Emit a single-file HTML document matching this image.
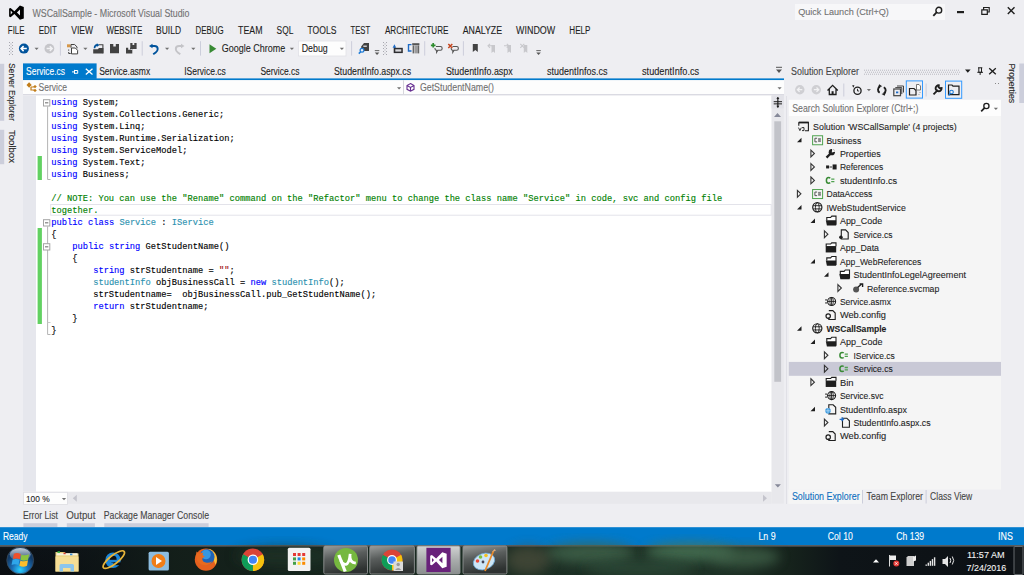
<!DOCTYPE html>
<html><head><meta charset="utf-8"><title>WSCallSample - Microsoft Visual Studio</title>
<style>
html,body{margin:0;padding:0;width:1024px;height:575px;overflow:hidden;background:#EEEEF2}
svg{display:block}
text{font-family:"Liberation Sans",sans-serif}
.code text{font-family:"Liberation Mono",monospace}
</style></head><body>
<svg width="1024" height="575" viewBox="0 0 1024 575">
<rect x="0" y="0" width="1024" height="575" fill="#EEEEF2" />
<path d="M9.1,8.6 L10.6,8 L14.4,11.2 L19.9,5.5 L23.8,6.9 L23.8,18.4 L19.9,19.8 L14.4,13.9 L10.6,17.2 L9.1,16.6 Z M10.7,10.6 L12.5,12.5 L10.7,14.4 Z M20,9.6 L20,15.4 L16.9,12.5 Z" fill="#000" fill-rule="evenodd"/>
<text x="32.49" y="16.50" font-size="10.2" fill="#717171" stroke="#717171" stroke-width="0.1" textLength="157.02" lengthAdjust="spacingAndGlyphs" >WSCallSample - Microsoft Visual Studio</text>
<rect x="795" y="4" width="150" height="16" fill="#F7F7F9" />
<text x="798.13" y="14.80" font-size="9.3" fill="#717171" stroke="#717171" stroke-width="0.1" textLength="90.73" lengthAdjust="spacingAndGlyphs" >Quick Launch (Ctrl+Q)</text>
<circle cx="938.8" cy="10.2" r="2.9" fill="none" stroke="#1E1E1E" stroke-width="1.4"/>
<path d="M936.8,12.2 L933.3,15.8" fill="none" stroke="#1E1E1E" stroke-width="1.8" />
<rect x="957" y="11" width="7" height="2.2" fill="#1E1E1E" />
<path d="M981.8,9.8 h5.5 v4.5 h-5.5 Z M983.6,9.8 v-2.3 h5.6 v4.5 h-1.9" fill="none" stroke="#1E1E1E" stroke-width="1.2" />
<path d="M1007.8,7.3 L1014.5,14 M1014.5,7.3 L1007.8,14" fill="none" stroke="#1E1E1E" stroke-width="1.4" />
<text x="7.85" y="33.70" font-size="10" fill="#1E1E1E" stroke="#1E1E1E" stroke-width="0.1" textLength="16.55" lengthAdjust="spacingAndGlyphs" >FILE</text>
<text x="38.80" y="33.70" font-size="10" fill="#1E1E1E" stroke="#1E1E1E" stroke-width="0.1" textLength="18.10" lengthAdjust="spacingAndGlyphs" >EDIT</text>
<text x="71.30" y="33.70" font-size="10" fill="#1E1E1E" stroke="#1E1E1E" stroke-width="0.1" textLength="21.80" lengthAdjust="spacingAndGlyphs" >VIEW</text>
<text x="106.40" y="33.70" font-size="10" fill="#1E1E1E" stroke="#1E1E1E" stroke-width="0.1" textLength="35.90" lengthAdjust="spacingAndGlyphs" >WEBSITE</text>
<text x="156.10" y="33.70" font-size="10" fill="#1E1E1E" stroke="#1E1E1E" stroke-width="0.1" textLength="24.90" lengthAdjust="spacingAndGlyphs" >BUILD</text>
<text x="195.60" y="33.70" font-size="10" fill="#1E1E1E" stroke="#1E1E1E" stroke-width="0.1" textLength="28.10" lengthAdjust="spacingAndGlyphs" >DEBUG</text>
<text x="238.10" y="33.70" font-size="10" fill="#1E1E1E" stroke="#1E1E1E" stroke-width="0.1" textLength="24.40" lengthAdjust="spacingAndGlyphs" >TEAM</text>
<text x="276.60" y="33.70" font-size="10" fill="#1E1E1E" stroke="#1E1E1E" stroke-width="0.1" textLength="16.70" lengthAdjust="spacingAndGlyphs" >SQL</text>
<text x="307.50" y="33.70" font-size="10" fill="#1E1E1E" stroke="#1E1E1E" stroke-width="0.1" textLength="28.90" lengthAdjust="spacingAndGlyphs" >TOOLS</text>
<text x="350.50" y="33.70" font-size="10" fill="#1E1E1E" stroke="#1E1E1E" stroke-width="0.1" textLength="19.60" lengthAdjust="spacingAndGlyphs" >TEST</text>
<text x="384.90" y="33.70" font-size="10" fill="#1E1E1E" stroke="#1E1E1E" stroke-width="0.1" textLength="63.60" lengthAdjust="spacingAndGlyphs" >ARCHITECTURE</text>
<text x="462.70" y="33.70" font-size="10" fill="#1E1E1E" stroke="#1E1E1E" stroke-width="0.1" textLength="39.40" lengthAdjust="spacingAndGlyphs" >ANALYZE</text>
<text x="516.10" y="33.70" font-size="10" fill="#1E1E1E" stroke="#1E1E1E" stroke-width="0.1" textLength="39.10" lengthAdjust="spacingAndGlyphs" >WINDOW</text>
<text x="569.30" y="33.70" font-size="10" fill="#1E1E1E" stroke="#1E1E1E" stroke-width="0.1" textLength="21.10" lengthAdjust="spacingAndGlyphs" >HELP</text>
<rect x="9" y="42" width="1" height="1" fill="#A8A8B0" />
<rect x="12" y="42" width="1" height="1" fill="#A8A8B0" />
<rect x="10.5" y="43.5" width="1" height="1" fill="#A8A8B0" />
<rect x="9" y="45.0" width="1" height="1" fill="#A8A8B0" />
<rect x="12" y="45.0" width="1" height="1" fill="#A8A8B0" />
<rect x="10.5" y="46.5" width="1" height="1" fill="#A8A8B0" />
<rect x="9" y="48.0" width="1" height="1" fill="#A8A8B0" />
<rect x="12" y="48.0" width="1" height="1" fill="#A8A8B0" />
<rect x="10.5" y="49.5" width="1" height="1" fill="#A8A8B0" />
<rect x="9" y="51.0" width="1" height="1" fill="#A8A8B0" />
<rect x="12" y="51.0" width="1" height="1" fill="#A8A8B0" />
<rect x="10.5" y="52.5" width="1" height="1" fill="#A8A8B0" />
<rect x="9" y="54.0" width="1" height="1" fill="#A8A8B0" />
<rect x="12" y="54.0" width="1" height="1" fill="#A8A8B0" />
<circle cx="23.9" cy="48.6" r="5" fill="#00539C"/>
<path d="M26.8,48.6 H21.3 M23.6,46.1 L21.1,48.6 L23.6,51.1" fill="none" stroke="#fff" stroke-width="1.5" />
<path d="M34.5,47.8 h4.2 l-2.1,2.2 Z" fill="#717171" />
<circle cx="49.4" cy="48.6" r="4.9" fill="#C6C6CA"/>
<path d="M46.6,48.6 H52 M49.8,46.2 L52.2,48.6 L49.8,51" fill="none" stroke="#F2F2F4" stroke-width="1.5" />
<rect x="59.9" y="41.2" width="1" height="14.399999999999999" fill="#CCCEDB" />
<rect x="67" y="44.3" width="3.5" height="3" fill="#D5974A" />
<path d="M71,44.5 h3.6 l2.4,2.4 v1.5" fill="none" stroke="#424242" stroke-width="1" />
<path d="M71.5,48 h3.8 l2.3,2.3 v3.6 h-6.1 Z" fill="#fff" stroke="#424242" stroke-width="1" />
<path d="M71,44.5 v3.2" fill="none" stroke="#424242" stroke-width="1" />
<path d="M68.7,49.5 v1.2 M68.7,52 v1.5 h2" fill="none" stroke="#424242" stroke-width="1" />
<path d="M83.3,47.8 h4.2 l-2.1,2.2 Z" fill="#717171" />
<path d="M98.8,44.8 h4.1 v8.5" fill="none" stroke="#424242" stroke-width="1.1" />
<path d="M93.2,49.2 h4.6 l1.2,-1.2 h4.4 v5.6 h-10.2 Z" fill="#424242" />
<path d="M94.5,48.3 q0,-3.2 3,-3.4" fill="none" stroke="#00539C" stroke-width="1.6" />
<path d="M96.8,43.2 l2.6,1.8 l-2.6,1.9 Z" fill="#00539C" />
<path d="M110,43.9 h9 v9.3 h-9 Z M113.3,43.9 v2.6 h2.5 v-2.6 Z" fill="#424242" fill-rule="evenodd"/>
<path d="M130.3,43 h6.3 v6 h-6.3 Z M132.5,43 v2 h1.8 v-2 Z" fill="#424242" fill-rule="evenodd"/>
<path d="M126,47.8 h6.3 v5.8 h-6.3 Z M128.2,47.8 v2 h1.8 v-2 Z" fill="#424242" fill-rule="evenodd"/>
<rect x="130.3" y="49" width="2" height="0.8" fill="#EEEEF2" />
<rect x="141.7" y="41.2" width="1" height="14.399999999999999" fill="#CCCEDB" />
<path d="M151,46 h3.5 q3.2,0 3.2,3 q0,2 -2,3.5 l-2.5,1.8" fill="none" stroke="#00539C" stroke-width="1.9" />
<path d="M149,46 l3.5,-2.2 v4.4 Z" fill="#00539C" />
<path d="M165,47.8 h4.2 l-2.1,2.2 Z" fill="#717171" />
<path d="M182.5,46 h-3.5 q-3.2,0 -3.2,3 q0,2 2,3.5 l2.5,1.8" fill="none" stroke="#C4C4C8" stroke-width="1.9" />
<path d="M184.5,46 l-3.5,-2.2 v4.4 Z" fill="#C4C4C8" />
<path d="M191.2,47.8 h4.2 l-2.1,2.2 Z" fill="#717171" />
<rect x="200.0" y="41.2" width="1" height="14.399999999999999" fill="#CCCEDB" />
<path d="M209.5,44.2 L216.3,48.7 L209.5,53.2 Z" fill="#388A34" />
<text x="221.69" y="52.00" font-size="10.3" fill="#1E1E1E" stroke="#1E1E1E" stroke-width="0.1" textLength="63.53" lengthAdjust="spacingAndGlyphs" >Google Chrome</text>
<path d="M289.8,47.8 h4.2 l-2.1,2.2 Z" fill="#717171" />
<rect x="298.5" y="41" width="47.5" height="15" fill="#FDFDFD" stroke="#E0E0E6" stroke-width="0.8"/>
<text x="301.69" y="52.00" font-size="10.3" fill="#1E1E1E" stroke="#1E1E1E" stroke-width="0.1" textLength="26.03" lengthAdjust="spacingAndGlyphs" >Debug</text>
<path d="M339.8,47.8 h4.2 l-2.1,2.2 Z" fill="#717171" />
<rect x="351.1" y="41.2" width="1" height="14.399999999999999" fill="#CCCEDB" />
<path d="M364,43.1 h5 v7.9 h-7.8 v-4.5 Z" fill="#424242" />
<rect x="363.3" y="45.6" width="3.5" height="1.2" fill="#EEEEF2" />
<circle cx="362" cy="50.3" r="1.9" fill="#EEEEF2" stroke="#1E7BD6" stroke-width="1.2"/>
<path d="M360.7,51.7 L358.8,53.6" fill="none" stroke="#1E7BD6" stroke-width="1.5" />
<rect x="374.8" y="50.2" width="4.5" height="0.9" fill="#555" />
<path d="M374.8,52.5 h4.5 l-2.25,2.5 Z" fill="#555" />
<rect x="383" y="42" width="1" height="1" fill="#A8A8B0" />
<rect x="386" y="42" width="1" height="1" fill="#A8A8B0" />
<rect x="384.5" y="43.5" width="1" height="1" fill="#A8A8B0" />
<rect x="383" y="45.0" width="1" height="1" fill="#A8A8B0" />
<rect x="386" y="45.0" width="1" height="1" fill="#A8A8B0" />
<rect x="384.5" y="46.5" width="1" height="1" fill="#A8A8B0" />
<rect x="383" y="48.0" width="1" height="1" fill="#A8A8B0" />
<rect x="386" y="48.0" width="1" height="1" fill="#A8A8B0" />
<rect x="384.5" y="49.5" width="1" height="1" fill="#A8A8B0" />
<rect x="383" y="51.0" width="1" height="1" fill="#A8A8B0" />
<rect x="386" y="51.0" width="1" height="1" fill="#A8A8B0" />
<rect x="384.5" y="52.5" width="1" height="1" fill="#A8A8B0" />
<rect x="383" y="54.0" width="1" height="1" fill="#A8A8B0" />
<rect x="386" y="54.0" width="1" height="1" fill="#A8A8B0" />
<path d="M392.6,47.8 l1.8,-3.6 l1.8,3.6 Z" fill="#1E6BC6" />
<rect x="394" y="46.8" width="0.9" height="2" fill="#1E6BC6" />
<rect x="393.7" y="47.8" width="9.1" height="5.3" fill="#2D2D30" />
<rect x="395.3" y="49.3" width="6" height="2.3" fill="#D8D8DC" />
<path d="M411.5,44.6 h-3 v6.4 h3" fill="none" stroke="#1E6BC6" stroke-width="1.4" />
<rect x="412.2" y="43.2" width="7.2" height="2" fill="#555" />
<rect x="412.6" y="45.4" width="1.8" height="8" fill="#666" />
<rect x="415.2" y="45.4" width="1.6" height="8" fill="#888" />
<rect x="417.4" y="45.4" width="1.8" height="8" fill="#666" />
<rect x="424.2" y="41.2" width="1" height="14.399999999999999" fill="#CCCEDB" />
<path d="M436,46.5 h4.5 q1.6,0 1.6,1.6 v0.6 q0,1.6 -1.6,1.6 h-2.6 l-1.3,2 v-2 q-1.6,0 -1.6,-1.6 v-0.6" fill="none" stroke="#555" stroke-width="1.1" />
<path d="M433.2,43 v4.6 M430.9,45.3 h4.6" fill="none" stroke="#2E8C2E" stroke-width="1.7" />
<path d="M452.5,46.5 h4.2 q1.6,0 1.6,1.6 v0.6 q0,1.6 -1.6,1.6 h-2.6 l-1.3,2 v-2 q-1.6,0 -1.6,-1.6 v-0.6" fill="none" stroke="#555" stroke-width="1.1" />
<path d="M448.3,44 L452.3,48 M452.3,44 L448.3,48" fill="none" stroke="#C5441C" stroke-width="1.5" />
<rect x="462.9" y="41.2" width="1" height="14.399999999999999" fill="#CCCEDB" />
<path d="M472.8,43.9 h5 v8.2 l-2.5,-2 l-2.5,2 Z" fill="#424242" />
<path d="M491.5,45 h3.5 v8 l-1.75,-1.6 l-1.75,1.6 Z" fill="#C8C8CC" />
<path d="M493,45.8 h-4.5 M490,43.8 l-2,2 l2,2" fill="none" stroke="#C8C8CC" stroke-width="1.1" />
<path d="M507.5,45 h3.5 v8 l-1.75,-1.6 l-1.75,1.6 Z" fill="#C8C8CC" />
<path d="M504,45.8 h4.5 M506.8,43.8 l2,2 l-2,2" fill="none" stroke="#C8C8CC" stroke-width="1.1" />
<path d="M523.8,45 h3.5 v8 l-1.75,-1.6 l-1.75,1.6 Z" fill="#C8C8CC" />
<path d="M520.3,43.8 l4,4 M524.3,43.8 l-4,4" fill="none" stroke="#C8C8CC" stroke-width="1.1" />
<rect x="536.3" y="50.2" width="4.5" height="0.9" fill="#555" />
<path d="M536.3,52.5 h4.5 l-2.25,2.5 Z" fill="#555" />
<rect x="0" y="63.8" width="4.2" height="57" fill="#CCCEDB" />
<rect x="0" y="129.8" width="4.2" height="34.4" fill="#CCCEDB" />
<g transform="translate(9.0,63.8) rotate(90)">
<text x="-0.48" y="0.00" font-size="9.7" fill="#1E1E1E" stroke="#1E1E1E" stroke-width="0.1" textLength="57.57" lengthAdjust="spacingAndGlyphs" >Server Explorer</text>
</g>
<g transform="translate(9.0,130.4) rotate(90)">
<text x="-0.48" y="0.00" font-size="9.7" fill="#1E1E1E" stroke="#1E1E1E" stroke-width="0.1" textLength="33.07" lengthAdjust="spacingAndGlyphs" >Toolbox</text>
</g>
<rect x="23" y="63.4" width="73.6" height="15.5" fill="#007ACC" />
<text x="26.10" y="74.80" font-size="10.0" fill="#FFFFFF" stroke="#FFFFFF" stroke-width="0.1" textLength="38.90" lengthAdjust="spacingAndGlyphs" >Service.cs</text>
<path d="M72,71.9 h2.5 M74.5,69.9 v4 M74.5,70.5 h3.2 v2.8 h-3.2" fill="none" stroke="#fff" stroke-width="1" />
<path d="M85.8,68.7 L92.5,74.4 M92.5,68.7 L85.8,74.4" fill="none" stroke="#fff" stroke-width="1.3" />
<text x="99.20" y="74.80" font-size="10.0" fill="#1E1E1E" stroke="#1E1E1E" stroke-width="0.1" textLength="51.00" lengthAdjust="spacingAndGlyphs" >Service.asmx</text>
<text x="184.20" y="74.80" font-size="10.0" fill="#1E1E1E" stroke="#1E1E1E" stroke-width="0.1" textLength="41.60" lengthAdjust="spacingAndGlyphs" >IService.cs</text>
<text x="260.40" y="74.80" font-size="10.0" fill="#1E1E1E" stroke="#1E1E1E" stroke-width="0.1" textLength="39.00" lengthAdjust="spacingAndGlyphs" >Service.cs</text>
<text x="334.00" y="74.80" font-size="10.0" fill="#1E1E1E" stroke="#1E1E1E" stroke-width="0.1" textLength="77.10" lengthAdjust="spacingAndGlyphs" >StudentInfo.aspx.cs</text>
<text x="445.90" y="74.80" font-size="10.0" fill="#1E1E1E" stroke="#1E1E1E" stroke-width="0.1" textLength="66.80" lengthAdjust="spacingAndGlyphs" >StudentInfo.aspx</text>
<text x="547.10" y="74.80" font-size="10.0" fill="#1E1E1E" stroke="#1E1E1E" stroke-width="0.1" textLength="60.40" lengthAdjust="spacingAndGlyphs" >studentInfos.cs</text>
<text x="642.00" y="74.80" font-size="10.0" fill="#1E1E1E" stroke="#1E1E1E" stroke-width="0.1" textLength="57.10" lengthAdjust="spacingAndGlyphs" >studentInfo.cs</text>
<rect x="776" y="66.8" width="6" height="1" fill="#555" />
<path d="M776,69.5 h6 l-3,3.5 Z" fill="#555" />
<rect x="23" y="78.4" width="761" height="1.8" fill="#007ACC" />
<rect x="23" y="80.2" width="761" height="14.2" fill="#FDFDFD" />
<rect x="23" y="94.2" width="761" height="1.6" fill="#D4D4DC" />
<rect x="403" y="80.2" width="1" height="14" fill="#D6D6DC" />
<path d="M26.5,85 l2.6,-2.8 l2.6,2.8 l-2.6,2.8 Z" fill="#C27D1A" />
<path d="M31,87 h3 M31,87 v3 h3" fill="none" stroke="#C27D1A" stroke-width="1.2" />
<path d="M33.2,86.6 l1.8,-1.6 l1.8,1.6 l-1.8,1.6 Z M33.2,90.4 l1.8,-1.6 l1.8,1.6 l-1.8,1.6 Z" fill="#C27D1A" />
<text x="38.50" y="90.70" font-size="10.0" fill="#717171" stroke="#717171" stroke-width="0.1" textLength="28.40" lengthAdjust="spacingAndGlyphs" >Service</text>
<path d="M397,87.2 h4.2 l-2.1,2.2 Z" fill="#717171" />
<path d="M410.5,83.6 l3.5,1.9 v3.8 l-3.5,1.9 l-3.5,-1.9 v-3.8 Z M407,85.5 l3.5,1.9 l3.5,-1.9 M410.5,87.4 v3.8" fill="none" stroke="#652D90" stroke-width="1.1" />
<text x="419.90" y="90.70" font-size="10.0" fill="#717171" stroke="#717171" stroke-width="0.1" textLength="74.10" lengthAdjust="spacingAndGlyphs" >GetStudentName()</text>
<path d="M777.5,87.2 h4.2 l-2.1,2.2 Z" fill="#717171" />
<rect x="23" y="95.4" width="749" height="396.4" fill="#FFFFFF" />
<rect x="23" y="95.4" width="13" height="396.4" fill="#E6E7ED" />
<rect x="50.7" y="204.5" width="720.5" height="10.7" fill="none" stroke="#E3E3EA" stroke-width="1"/>
<rect x="37.6" y="156" width="4.3" height="24" fill="#62D162" />
<rect x="37.6" y="228" width="4.3" height="96" fill="#62D162" />
<rect x="43.5" y="99.7" width="6.3" height="6.3" fill="#FFFFFF" stroke="#A5A5A5" stroke-width="1"/>
<rect x="45" y="102.4" width="3.3" height="0.9" fill="#555" />
<path d="M47.6,106.3 V179.5 H50.5" fill="none" stroke="#B4B4B4" stroke-width="1" />
<rect x="43.5" y="219.7" width="6.3" height="6.3" fill="#FFFFFF" stroke="#A5A5A5" stroke-width="1"/>
<rect x="45" y="222.39999999999998" width="3.3" height="0.9" fill="#555" />
<path d="M47.6,226.3 V334.5 H50.5" fill="none" stroke="#B4B4B4" stroke-width="1" />
<rect x="43.5" y="243.7" width="6.3" height="6.3" fill="#FFFFFF" stroke="#A5A5A5" stroke-width="1"/>
<rect x="45" y="246.39999999999998" width="3.3" height="0.9" fill="#555" />
<path d="M47.6,322.5 H50.5" fill="none" stroke="#C8C8C8" stroke-width="1" />
<g class="code" transform="translate(51.2,0) scale(0.94070,1)" font-size="9.3" style="white-space:pre">
<text x="0" y="105.2" xml:space="preserve"><tspan fill="#0000FF" stroke="#0000FF" stroke-width="0.14">using</tspan><tspan fill="#000000" stroke="#000000" stroke-width="0.14"> System;</tspan></text>
<text x="0" y="117.2" xml:space="preserve"><tspan fill="#0000FF" stroke="#0000FF" stroke-width="0.14">using</tspan><tspan fill="#000000" stroke="#000000" stroke-width="0.14"> System.Collections.Generic;</tspan></text>
<text x="0" y="129.2" xml:space="preserve"><tspan fill="#0000FF" stroke="#0000FF" stroke-width="0.14">using</tspan><tspan fill="#000000" stroke="#000000" stroke-width="0.14"> System.Linq;</tspan></text>
<text x="0" y="141.2" xml:space="preserve"><tspan fill="#0000FF" stroke="#0000FF" stroke-width="0.14">using</tspan><tspan fill="#000000" stroke="#000000" stroke-width="0.14"> System.Runtime.Serialization;</tspan></text>
<text x="0" y="153.2" xml:space="preserve"><tspan fill="#0000FF" stroke="#0000FF" stroke-width="0.14">using</tspan><tspan fill="#000000" stroke="#000000" stroke-width="0.14"> System.ServiceModel;</tspan></text>
<text x="0" y="165.2" xml:space="preserve"><tspan fill="#0000FF" stroke="#0000FF" stroke-width="0.14">using</tspan><tspan fill="#000000" stroke="#000000" stroke-width="0.14"> System.Text;</tspan></text>
<text x="0" y="177.2" xml:space="preserve"><tspan fill="#0000FF" stroke="#0000FF" stroke-width="0.14">using</tspan><tspan fill="#000000" stroke="#000000" stroke-width="0.14"> Business;</tspan></text>
<text x="0" y="201.2" xml:space="preserve"><tspan fill="#008000" stroke="#008000" stroke-width="0.14">// NOTE: You can use the &quot;Rename&quot; command on the &quot;Refactor&quot; menu to change the class name &quot;Service&quot; in code, svc and config file</tspan></text>
<text x="0" y="213.2" xml:space="preserve"><tspan fill="#008000" stroke="#008000" stroke-width="0.14">together.</tspan></text>
<text x="0" y="225.2" xml:space="preserve"><tspan fill="#0000FF" stroke="#0000FF" stroke-width="0.14">public</tspan><tspan fill="#000000" stroke="#000000" stroke-width="0.14"> </tspan><tspan fill="#0000FF" stroke="#0000FF" stroke-width="0.14">class</tspan><tspan fill="#000000" stroke="#000000" stroke-width="0.14"> </tspan><tspan fill="#2B91AF" stroke="#2B91AF" stroke-width="0.14">Service</tspan><tspan fill="#000000" stroke="#000000" stroke-width="0.14"> : </tspan><tspan fill="#2B91AF" stroke="#2B91AF" stroke-width="0.14">IService</tspan></text>
<text x="0" y="237.2" xml:space="preserve"><tspan fill="#000000" stroke="#000000" stroke-width="0.14">{</tspan></text>
<text x="0" y="249.2" xml:space="preserve"><tspan fill="#000000" stroke="#000000" stroke-width="0.14">    </tspan><tspan fill="#0000FF" stroke="#0000FF" stroke-width="0.14">public</tspan><tspan fill="#000000" stroke="#000000" stroke-width="0.14"> </tspan><tspan fill="#0000FF" stroke="#0000FF" stroke-width="0.14">string</tspan><tspan fill="#000000" stroke="#000000" stroke-width="0.14"> GetStudentName()</tspan></text>
<text x="0" y="261.2" xml:space="preserve"><tspan fill="#000000" stroke="#000000" stroke-width="0.14">    {</tspan></text>
<text x="0" y="273.2" xml:space="preserve"><tspan fill="#000000" stroke="#000000" stroke-width="0.14">        </tspan><tspan fill="#0000FF" stroke="#0000FF" stroke-width="0.14">string</tspan><tspan fill="#000000" stroke="#000000" stroke-width="0.14"> strStudentname = </tspan><tspan fill="#A31515" stroke="#A31515" stroke-width="0.14">&quot;&quot;</tspan><tspan fill="#000000" stroke="#000000" stroke-width="0.14">;</tspan></text>
<text x="0" y="285.2" xml:space="preserve"><tspan fill="#000000" stroke="#000000" stroke-width="0.14">        </tspan><tspan fill="#2B91AF" stroke="#2B91AF" stroke-width="0.14">studentInfo</tspan><tspan fill="#000000" stroke="#000000" stroke-width="0.14"> objBusinessCall = </tspan><tspan fill="#0000FF" stroke="#0000FF" stroke-width="0.14">new</tspan><tspan fill="#000000" stroke="#000000" stroke-width="0.14"> </tspan><tspan fill="#2B91AF" stroke="#2B91AF" stroke-width="0.14">studentInfo</tspan><tspan fill="#000000" stroke="#000000" stroke-width="0.14">();</tspan></text>
<text x="0" y="297.2" xml:space="preserve"><tspan fill="#000000" stroke="#000000" stroke-width="0.14">        strStudentname=  objBusinessCall.pub_GetStudentName();</tspan></text>
<text x="0" y="309.2" xml:space="preserve"><tspan fill="#000000" stroke="#000000" stroke-width="0.14">        </tspan><tspan fill="#0000FF" stroke="#0000FF" stroke-width="0.14">return</tspan><tspan fill="#000000" stroke="#000000" stroke-width="0.14"> strStudentname;</tspan></text>
<text x="0" y="321.2" xml:space="preserve"><tspan fill="#000000" stroke="#000000" stroke-width="0.14">    }</tspan></text>
<text x="0" y="333.2" xml:space="preserve"><tspan fill="#000000" stroke="#000000" stroke-width="0.14">}</tspan></text>
</g>
<rect x="771.5" y="95.4" width="12.3" height="408.2" fill="#E8E8EC" />
<rect x="771.5" y="95.4" width="12.3" height="13" fill="#E2E2E8" />
<rect x="773.7" y="101.1" width="8.3" height="1.1" fill="#333" />
<rect x="773.7" y="103.3" width="8.3" height="1.1" fill="#333" />
<path d="M777.85,97.3 V107.4" fill="none" stroke="#1E1E1E" stroke-width="1.2" />
<path d="M776.3,99 l1.55,-1.9 l1.55,1.9 Z M776.3,105.8 l1.55,1.9 l1.55,-1.9 Z" fill="#1E1E1E" />
<path d="M774,116.9 L777.5,113.1 L781,116.9 Z" fill="#868999" />
<rect x="774.3" y="121.3" width="6.8" height="260.5" fill="#C2C3C9" />
<path d="M774.8,484.3 L777.85,487.5 L780.9,484.3 Z" fill="#868999" />
<rect x="23.4" y="491.8" width="748" height="12" fill="#E8E8EC" />
<rect x="23.6" y="492.3" width="43.8" height="12.2" fill="#FDFDFD" stroke="#DCDCE2" stroke-width="0.8"/>
<text x="25.92" y="501.70" font-size="9.5" fill="#1E1E1E" stroke="#1E1E1E" stroke-width="0.1" textLength="23.75" lengthAdjust="spacingAndGlyphs" >100 %</text>
<path d="M61.9,498 h4.2 l-2.1,2.2 Z" fill="#717171" />
<path d="M76.8,494.8 L72.8,498.3 L76.8,501.7 Z" fill="#C4C4CC" />
<path d="M763,494.8 L767,498.3 L763,501.7 Z" fill="#C4C4CC" />
<text x="22.89" y="518.50" font-size="10.2" fill="#444444" stroke="#444444" stroke-width="0.1" textLength="35.02" lengthAdjust="spacingAndGlyphs" >Error List</text>
<rect x="23.4" y="523.2" width="34.0" height="3.8" fill="#CCCEDB" />
<text x="66.29" y="518.50" font-size="10.2" fill="#444444" stroke="#444444" stroke-width="0.1" textLength="29.12" lengthAdjust="spacingAndGlyphs" >Output</text>
<rect x="66.8" y="523.2" width="28.10000000000001" height="3.8" fill="#CCCEDB" />
<text x="103.79" y="518.50" font-size="10.2" fill="#444444" stroke="#444444" stroke-width="0.1" textLength="105.32" lengthAdjust="spacingAndGlyphs" >Package Manager Console</text>
<rect x="104.3" y="523.2" width="104.3" height="3.8" fill="#CCCEDB" />
<text x="791.10" y="74.80" font-size="10.0" fill="#444444" stroke="#444444" stroke-width="0.1" textLength="67.80" lengthAdjust="spacingAndGlyphs" >Solution Explorer</text>
<rect x="864" y="69.7" width="1" height="1" fill="#B8B8C0" />
<rect x="866" y="69.7" width="1" height="1" fill="#B8B8C0" />
<rect x="868" y="69.7" width="1" height="1" fill="#B8B8C0" />
<rect x="870" y="69.7" width="1" height="1" fill="#B8B8C0" />
<rect x="872" y="69.7" width="1" height="1" fill="#B8B8C0" />
<rect x="874" y="69.7" width="1" height="1" fill="#B8B8C0" />
<rect x="876" y="69.7" width="1" height="1" fill="#B8B8C0" />
<rect x="878" y="69.7" width="1" height="1" fill="#B8B8C0" />
<rect x="880" y="69.7" width="1" height="1" fill="#B8B8C0" />
<rect x="882" y="69.7" width="1" height="1" fill="#B8B8C0" />
<rect x="884" y="69.7" width="1" height="1" fill="#B8B8C0" />
<rect x="886" y="69.7" width="1" height="1" fill="#B8B8C0" />
<rect x="888" y="69.7" width="1" height="1" fill="#B8B8C0" />
<rect x="890" y="69.7" width="1" height="1" fill="#B8B8C0" />
<rect x="892" y="69.7" width="1" height="1" fill="#B8B8C0" />
<rect x="894" y="69.7" width="1" height="1" fill="#B8B8C0" />
<rect x="896" y="69.7" width="1" height="1" fill="#B8B8C0" />
<rect x="898" y="69.7" width="1" height="1" fill="#B8B8C0" />
<rect x="900" y="69.7" width="1" height="1" fill="#B8B8C0" />
<rect x="902" y="69.7" width="1" height="1" fill="#B8B8C0" />
<rect x="904" y="69.7" width="1" height="1" fill="#B8B8C0" />
<rect x="906" y="69.7" width="1" height="1" fill="#B8B8C0" />
<rect x="908" y="69.7" width="1" height="1" fill="#B8B8C0" />
<rect x="910" y="69.7" width="1" height="1" fill="#B8B8C0" />
<rect x="912" y="69.7" width="1" height="1" fill="#B8B8C0" />
<rect x="914" y="69.7" width="1" height="1" fill="#B8B8C0" />
<rect x="916" y="69.7" width="1" height="1" fill="#B8B8C0" />
<rect x="918" y="69.7" width="1" height="1" fill="#B8B8C0" />
<rect x="920" y="69.7" width="1" height="1" fill="#B8B8C0" />
<rect x="922" y="69.7" width="1" height="1" fill="#B8B8C0" />
<rect x="924" y="69.7" width="1" height="1" fill="#B8B8C0" />
<rect x="926" y="69.7" width="1" height="1" fill="#B8B8C0" />
<rect x="928" y="69.7" width="1" height="1" fill="#B8B8C0" />
<rect x="930" y="69.7" width="1" height="1" fill="#B8B8C0" />
<rect x="932" y="69.7" width="1" height="1" fill="#B8B8C0" />
<rect x="934" y="69.7" width="1" height="1" fill="#B8B8C0" />
<rect x="936" y="69.7" width="1" height="1" fill="#B8B8C0" />
<rect x="938" y="69.7" width="1" height="1" fill="#B8B8C0" />
<rect x="940" y="69.7" width="1" height="1" fill="#B8B8C0" />
<rect x="942" y="69.7" width="1" height="1" fill="#B8B8C0" />
<rect x="944" y="69.7" width="1" height="1" fill="#B8B8C0" />
<rect x="946" y="69.7" width="1" height="1" fill="#B8B8C0" />
<rect x="948" y="69.7" width="1" height="1" fill="#B8B8C0" />
<rect x="950" y="69.7" width="1" height="1" fill="#B8B8C0" />
<rect x="952" y="69.7" width="1" height="1" fill="#B8B8C0" />
<rect x="954" y="69.7" width="1" height="1" fill="#B8B8C0" />
<rect x="956" y="69.7" width="1" height="1" fill="#B8B8C0" />
<rect x="958" y="69.7" width="1" height="1" fill="#B8B8C0" />
<rect x="865" y="71.7" width="1" height="1" fill="#B8B8C0" />
<rect x="867" y="71.7" width="1" height="1" fill="#B8B8C0" />
<rect x="869" y="71.7" width="1" height="1" fill="#B8B8C0" />
<rect x="871" y="71.7" width="1" height="1" fill="#B8B8C0" />
<rect x="873" y="71.7" width="1" height="1" fill="#B8B8C0" />
<rect x="875" y="71.7" width="1" height="1" fill="#B8B8C0" />
<rect x="877" y="71.7" width="1" height="1" fill="#B8B8C0" />
<rect x="879" y="71.7" width="1" height="1" fill="#B8B8C0" />
<rect x="881" y="71.7" width="1" height="1" fill="#B8B8C0" />
<rect x="883" y="71.7" width="1" height="1" fill="#B8B8C0" />
<rect x="885" y="71.7" width="1" height="1" fill="#B8B8C0" />
<rect x="887" y="71.7" width="1" height="1" fill="#B8B8C0" />
<rect x="889" y="71.7" width="1" height="1" fill="#B8B8C0" />
<rect x="891" y="71.7" width="1" height="1" fill="#B8B8C0" />
<rect x="893" y="71.7" width="1" height="1" fill="#B8B8C0" />
<rect x="895" y="71.7" width="1" height="1" fill="#B8B8C0" />
<rect x="897" y="71.7" width="1" height="1" fill="#B8B8C0" />
<rect x="899" y="71.7" width="1" height="1" fill="#B8B8C0" />
<rect x="901" y="71.7" width="1" height="1" fill="#B8B8C0" />
<rect x="903" y="71.7" width="1" height="1" fill="#B8B8C0" />
<rect x="905" y="71.7" width="1" height="1" fill="#B8B8C0" />
<rect x="907" y="71.7" width="1" height="1" fill="#B8B8C0" />
<rect x="909" y="71.7" width="1" height="1" fill="#B8B8C0" />
<rect x="911" y="71.7" width="1" height="1" fill="#B8B8C0" />
<rect x="913" y="71.7" width="1" height="1" fill="#B8B8C0" />
<rect x="915" y="71.7" width="1" height="1" fill="#B8B8C0" />
<rect x="917" y="71.7" width="1" height="1" fill="#B8B8C0" />
<rect x="919" y="71.7" width="1" height="1" fill="#B8B8C0" />
<rect x="921" y="71.7" width="1" height="1" fill="#B8B8C0" />
<rect x="923" y="71.7" width="1" height="1" fill="#B8B8C0" />
<rect x="925" y="71.7" width="1" height="1" fill="#B8B8C0" />
<rect x="927" y="71.7" width="1" height="1" fill="#B8B8C0" />
<rect x="929" y="71.7" width="1" height="1" fill="#B8B8C0" />
<rect x="931" y="71.7" width="1" height="1" fill="#B8B8C0" />
<rect x="933" y="71.7" width="1" height="1" fill="#B8B8C0" />
<rect x="935" y="71.7" width="1" height="1" fill="#B8B8C0" />
<rect x="937" y="71.7" width="1" height="1" fill="#B8B8C0" />
<rect x="939" y="71.7" width="1" height="1" fill="#B8B8C0" />
<rect x="941" y="71.7" width="1" height="1" fill="#B8B8C0" />
<rect x="943" y="71.7" width="1" height="1" fill="#B8B8C0" />
<rect x="945" y="71.7" width="1" height="1" fill="#B8B8C0" />
<rect x="947" y="71.7" width="1" height="1" fill="#B8B8C0" />
<rect x="949" y="71.7" width="1" height="1" fill="#B8B8C0" />
<rect x="951" y="71.7" width="1" height="1" fill="#B8B8C0" />
<rect x="953" y="71.7" width="1" height="1" fill="#B8B8C0" />
<rect x="955" y="71.7" width="1" height="1" fill="#B8B8C0" />
<rect x="957" y="71.7" width="1" height="1" fill="#B8B8C0" />
<rect x="959" y="71.7" width="1" height="1" fill="#B8B8C0" />
<rect x="864" y="73.7" width="1" height="1" fill="#B8B8C0" />
<rect x="866" y="73.7" width="1" height="1" fill="#B8B8C0" />
<rect x="868" y="73.7" width="1" height="1" fill="#B8B8C0" />
<rect x="870" y="73.7" width="1" height="1" fill="#B8B8C0" />
<rect x="872" y="73.7" width="1" height="1" fill="#B8B8C0" />
<rect x="874" y="73.7" width="1" height="1" fill="#B8B8C0" />
<rect x="876" y="73.7" width="1" height="1" fill="#B8B8C0" />
<rect x="878" y="73.7" width="1" height="1" fill="#B8B8C0" />
<rect x="880" y="73.7" width="1" height="1" fill="#B8B8C0" />
<rect x="882" y="73.7" width="1" height="1" fill="#B8B8C0" />
<rect x="884" y="73.7" width="1" height="1" fill="#B8B8C0" />
<rect x="886" y="73.7" width="1" height="1" fill="#B8B8C0" />
<rect x="888" y="73.7" width="1" height="1" fill="#B8B8C0" />
<rect x="890" y="73.7" width="1" height="1" fill="#B8B8C0" />
<rect x="892" y="73.7" width="1" height="1" fill="#B8B8C0" />
<rect x="894" y="73.7" width="1" height="1" fill="#B8B8C0" />
<rect x="896" y="73.7" width="1" height="1" fill="#B8B8C0" />
<rect x="898" y="73.7" width="1" height="1" fill="#B8B8C0" />
<rect x="900" y="73.7" width="1" height="1" fill="#B8B8C0" />
<rect x="902" y="73.7" width="1" height="1" fill="#B8B8C0" />
<rect x="904" y="73.7" width="1" height="1" fill="#B8B8C0" />
<rect x="906" y="73.7" width="1" height="1" fill="#B8B8C0" />
<rect x="908" y="73.7" width="1" height="1" fill="#B8B8C0" />
<rect x="910" y="73.7" width="1" height="1" fill="#B8B8C0" />
<rect x="912" y="73.7" width="1" height="1" fill="#B8B8C0" />
<rect x="914" y="73.7" width="1" height="1" fill="#B8B8C0" />
<rect x="916" y="73.7" width="1" height="1" fill="#B8B8C0" />
<rect x="918" y="73.7" width="1" height="1" fill="#B8B8C0" />
<rect x="920" y="73.7" width="1" height="1" fill="#B8B8C0" />
<rect x="922" y="73.7" width="1" height="1" fill="#B8B8C0" />
<rect x="924" y="73.7" width="1" height="1" fill="#B8B8C0" />
<rect x="926" y="73.7" width="1" height="1" fill="#B8B8C0" />
<rect x="928" y="73.7" width="1" height="1" fill="#B8B8C0" />
<rect x="930" y="73.7" width="1" height="1" fill="#B8B8C0" />
<rect x="932" y="73.7" width="1" height="1" fill="#B8B8C0" />
<rect x="934" y="73.7" width="1" height="1" fill="#B8B8C0" />
<rect x="936" y="73.7" width="1" height="1" fill="#B8B8C0" />
<rect x="938" y="73.7" width="1" height="1" fill="#B8B8C0" />
<rect x="940" y="73.7" width="1" height="1" fill="#B8B8C0" />
<rect x="942" y="73.7" width="1" height="1" fill="#B8B8C0" />
<rect x="944" y="73.7" width="1" height="1" fill="#B8B8C0" />
<rect x="946" y="73.7" width="1" height="1" fill="#B8B8C0" />
<rect x="948" y="73.7" width="1" height="1" fill="#B8B8C0" />
<rect x="950" y="73.7" width="1" height="1" fill="#B8B8C0" />
<rect x="952" y="73.7" width="1" height="1" fill="#B8B8C0" />
<rect x="954" y="73.7" width="1" height="1" fill="#B8B8C0" />
<rect x="956" y="73.7" width="1" height="1" fill="#B8B8C0" />
<rect x="958" y="73.7" width="1" height="1" fill="#B8B8C0" />
<path d="M965,69.5 h5.6 l-2.8,3.3 Z" fill="#1E1E1E" />
<path d="M978,67.8 h4.3 M978.8,67.8 v4.5 h2.7 v-4.5 M977.3,72.3 h5.7 M980.15,72.3 v2.6" fill="none" stroke="#1E1E1E" stroke-width="1" />
<path d="M989.2,68.2 L995.8,74.2 M995.8,68.2 L989.2,74.2" fill="none" stroke="#1E1E1E" stroke-width="1.3" />
<circle cx="799.8" cy="89.7" r="4.7" fill="#CFCFD3"/>
<path d="M802.3,89.7 h-4.8 M799.6,87.5 l-2.2,2.2 l2.2,2.2" fill="none" stroke="#F2F2F4" stroke-width="1.3" />
<circle cx="816.3" cy="89.7" r="4.7" fill="#CFCFD3"/>
<path d="M813.8,89.7 h4.8 M816.5,87.5 l2.2,2.2 l-2.2,2.2" fill="none" stroke="#F2F2F4" stroke-width="1.3" />
<path d="M827.5,90.5 L832.6,85.3 L837.8,90.5 M829.3,89 V94.5 H836 V89" fill="none" stroke="#1E1E1E" stroke-width="1.3" />
<rect x="831.6" y="91.2" width="2" height="3.3" fill="#1E1E1E" />
<rect x="843.3" y="83.5" width="1" height="13" fill="#CCCEDB" />
<circle cx="857.5" cy="90.8" r="3.6" fill="none" stroke="#1E1E1E" stroke-width="1.3"/>
<path d="M857.5,88.8 v2.2 h1.6" fill="none" stroke="#1E1E1E" stroke-width="0.9" />
<path d="M852.2,85.2 l2.3,0 l-1.2,2.5 Z" fill="#1E1E1E" />
<path d="M866.8,89 h4.2 l-2.1,2.2 Z" fill="#717171" />
<g transform="rotate(-75 881.8 90)">
<path d="M878.6,88.6 A3.5,3.5 0 0 1 884.6,87.4" fill="none" stroke="#1E1E1E" stroke-width="1.9" />
<path d="M885,91.2 A3.5,3.5 0 0 1 879,92.8" fill="none" stroke="#1E1E1E" stroke-width="1.9" />
<path d="M883,85.6 L886.6,86 L885.6,89.4 Z" fill="#1E1E1E" />
<path d="M880.6,94.6 L877,94.2 L878,90.8 Z" fill="#1E1E1E" />
</g>
<path d="M897,86 h6.5 v6.5 M895.3,87.6 h6.5 v6.5" fill="none" stroke="#424242" stroke-width="1" />
<rect x="893.8" y="89" width="6.7" height="6.7" fill="#EEEEF2" stroke="#424242" stroke-width="1.2"/>
<rect x="896" y="91.5" width="2.3" height="1.8" fill="#1E6BC6" />
<rect x="906.3" y="80.9" width="16.2" height="17.2" fill="#EEEEF2" stroke="#3399FF" stroke-width="1"/>
<path d="M909.5,88.5 h4.5 l2,2 v4.5 h-6.5 Z" fill="none" stroke="#1E1E1E" stroke-width="1.2" />
<path d="M916.5,84.5 h2.5 l1.5,1.5 v4 h-4 Z" fill="#fff" stroke="#555" stroke-width="0.8" />
<path d="M920,92 v2 M918.5,94.5 h1" fill="none" stroke="#888" stroke-width="0.8" stroke-dasharray="1,1"/>
<rect x="925.6" y="83.5" width="1" height="13" fill="#CCCEDB" />
<path d="M933.5,94.3 L938,89.8 M938.8,85.3 a3,3 0 1 0 2.8,2.8 l-1.8,0.2 l-1.2,-1.2 Z" fill="none" stroke="#1E1E1E" stroke-width="1.9" />
<rect x="945.5" y="81.1" width="16.2" height="17.2" fill="#EEEEF2" stroke="#3399FF" stroke-width="1"/>
<path d="M948.5,85 h3.5 l1,1.2 h6 v8.5 h-10.5 Z" fill="none" stroke="#1E1E1E" stroke-width="1.2" />
<circle cx="951.5" cy="92" r="1.8" fill="none" stroke="#1E7BD6" stroke-width="1.1"/>
<path d="M950.3,93.3 L948.6,95.5" fill="none" stroke="#1E7BD6" stroke-width="1.3" />
<rect x="995" y="83" width="1" height="1" fill="#888" />
<rect x="998" y="83" width="1" height="1" fill="#888" />
<rect x="788.8" y="99.8" width="212.2" height="16.3" fill="#FDFDFD" />
<text x="792.30" y="111.90" font-size="10.0" fill="#717171" stroke="#717171" stroke-width="0.1" textLength="126.00" lengthAdjust="spacingAndGlyphs" >Search Solution Explorer (Ctrl+;)</text>
<circle cx="986.4" cy="106" r="2.6" fill="none" stroke="#1E1E1E" stroke-width="1.3"/>
<path d="M984.6,107.9 L981.2,111.4" fill="none" stroke="#1E1E1E" stroke-width="1.7" />
<path d="M993.8,107.8 h4.2 l-2.1,2.2 Z" fill="#717171" />
<rect x="788.8" y="116.1" width="212.2" height="373.4" fill="#F5F5F5" />
<rect x="786" y="96" width="1" height="408" fill="#E0E0E6" />
<rect x="788.8" y="361.9" width="212.2" height="13.9" fill="#C9C9D6" />
<path d="M798.8000000000001,122.3 h9.6 v8.4 h-3.4 M798.8000000000001,122.3 v3.5" fill="none" stroke="#1E1E1E" stroke-width="1.1" />
<rect x="798.8000000000001" y="121.8" width="9.6" height="1.6" fill="#1E1E1E" />
<path d="M798.5,127.6 l1.4,3 l1.4,-3 M802.0,127.6 h2 v3 h-2" fill="none" stroke="#1E1E1E" stroke-width="0.9" />
<text x="813.12" y="130.10" font-size="9.7" fill="#1E1E1E" stroke="#1E1E1E" stroke-width="0.1" textLength="143.47" lengthAdjust="spacingAndGlyphs" >Solution &#x27;WSCallSample&#x27; (4 projects)</text>
<path d="M801.5,137.85 V142.35 H797.0 Z" fill="#1E1E1E" />
<rect x="812.6" y="135.74999999999997" width="10" height="9" fill="#F5F5F5" stroke="#4FA24F" stroke-width="1"/>
<path d="M817.1,138.24999999999997 h-2.2 v3.6 h2.2" fill="none" stroke="#555" stroke-width="1" />
<path d="M818.1,139.04999999999998 h2.8 M818.1,141.04999999999998 h2.8 M818.9,138.04999999999998 v4 M820.1,138.04999999999998 v4" fill="none" stroke="#555" stroke-width="0.7" />
<text x="826.41" y="143.55" font-size="9.7" fill="#1E1E1E" stroke="#1E1E1E" stroke-width="0.1" textLength="34.77" lengthAdjust="spacingAndGlyphs" >Business</text>
<path d="M810.9,150.1 L814.4,153.5 L810.9,156.9 Z" fill="none" stroke="#333" stroke-width="1.1" />
<path d="M826.5,157.6 L830.6,153.5" fill="none" stroke="#1E1E1E" stroke-width="2.3" />
<circle cx="831.8000000000001" cy="152.2" r="3.1" fill="#1E1E1E"/>
<path d="M831.8000000000001,152.4 L832.2,148.3 L835.8000000000001,151.6 Z" fill="#F5F5F5" />
<text x="839.91" y="157.00" font-size="9.7" fill="#1E1E1E" stroke="#1E1E1E" stroke-width="0.1" textLength="40.77" lengthAdjust="spacingAndGlyphs" >Properties</text>
<path d="M810.9,163.54999999999998 L814.4,166.95 L810.9,170.35 Z" fill="none" stroke="#333" stroke-width="1.1" />
<rect x="826.1" y="165.45" width="3" height="3" fill="#1E1E1E" />
<rect x="829.6" y="166.54999999999998" width="2.5" height="0.9" fill="#1E1E1E" />
<rect x="832.6" y="164.45" width="4" height="5" fill="#1E1E1E" />
<text x="839.91" y="170.45" font-size="9.7" fill="#1E1E1E" stroke="#1E1E1E" stroke-width="0.1" textLength="43.37" lengthAdjust="spacingAndGlyphs" >References</text>
<path d="M810.9,176.99999999999997 L814.4,180.39999999999998 L810.9,183.79999999999998 Z" fill="none" stroke="#333" stroke-width="1.1" />
<path d="M830.2,178.2 q-0.6,-0.6 -1.6,-0.6 q-2.2,0 -2.2,2.8 q0,2.8 2.2,2.8 q1,0 1.6,-0.6" fill="none" stroke="#388A34" stroke-width="1.5" />
<path d="M831.2,179.2 h3.2 M831.2,181.59999999999997 h3.2" fill="none" stroke="#4FA24F" stroke-width="1.3" />
<text x="839.91" y="183.90" font-size="9.7" fill="#1E1E1E" stroke="#1E1E1E" stroke-width="0.1" textLength="57.27" lengthAdjust="spacingAndGlyphs" >studentInfo.cs</text>
<path d="M797.4,190.45 L800.9,193.85 L797.4,197.25 Z" fill="none" stroke="#333" stroke-width="1.1" />
<rect x="812.6" y="189.54999999999998" width="10" height="9" fill="#F5F5F5" stroke="#4FA24F" stroke-width="1"/>
<path d="M817.1,192.04999999999998 h-2.2 v3.6 h2.2" fill="none" stroke="#555" stroke-width="1" />
<path d="M818.1,192.85 h2.8 M818.1,194.85 h2.8 M818.9,191.85 v4 M820.1,191.85 v4" fill="none" stroke="#555" stroke-width="0.7" />
<text x="826.41" y="197.35" font-size="9.7" fill="#1E1E1E" stroke="#1E1E1E" stroke-width="0.1" textLength="45.97" lengthAdjust="spacingAndGlyphs" >DataAccess</text>
<path d="M801.5,205.1 V209.6 H797.0 Z" fill="#1E1E1E" />
<circle cx="817.3000000000001" cy="207.29999999999998" r="4.6" fill="none" stroke="#1E1E1E" stroke-width="1.2"/>
<path d="M813.1,205.7 h8.4 M813.1,208.89999999999998 h8.4" fill="none" stroke="#1E1E1E" stroke-width="0.9" />
<ellipse cx="817.3000000000001" cy="207.29999999999998" rx="1.9" ry="4.6" fill="none" stroke="#1E1E1E" stroke-width="0.9"/>
<text x="826.41" y="210.80" font-size="9.7" fill="#1E1E1E" stroke="#1E1E1E" stroke-width="0.1" textLength="79.37" lengthAdjust="spacingAndGlyphs" >IWebStudentService</text>
<path d="M815.0,218.55 V223.05 H810.5 Z" fill="#1E1E1E" />
<path d="M826.8000000000001,220.25 V217.55 h3.8 l1.2,-1.4 h4.2 V224.75" fill="#FFFFFF" stroke="#1E1E1E" stroke-width="1.1" />
<path d="M825.8000000000001,220.15 H836.1 V225.45 H826.9 Z" fill="#1E1E1E" />
<text x="839.91" y="224.25" font-size="9.7" fill="#1E1E1E" stroke="#1E1E1E" stroke-width="0.1" textLength="42.37" lengthAdjust="spacingAndGlyphs" >App_Code</text>
<path d="M824.4,230.79999999999998 L827.9,234.2 L824.4,237.6 Z" fill="none" stroke="#333" stroke-width="1.1" />
<path d="M841.3000000000001,229.89999999999998 h4.3 l2.6,2.6 v6.5 h-6.9 Z" fill="none" stroke="#1E1E1E" stroke-width="1.1" />
<circle cx="840.9" cy="237.2" r="1.8" fill="#1E1E1E"/>
<text x="853.41" y="237.70" font-size="9.7" fill="#1E1E1E" stroke="#1E1E1E" stroke-width="0.1" textLength="39.17" lengthAdjust="spacingAndGlyphs" >Service.cs</text>
<path d="M826.2,246.14999999999998 V244.04999999999998 h4.4 l1.1,-1.2 h4.3 V246.14999999999998" fill="#FFFFFF" stroke="#1E1E1E" stroke-width="1.1" />
<rect x="825.7" y="246.04999999999998" width="10.5" height="6.4" fill="#1E1E1E" />
<text x="839.91" y="251.15" font-size="9.7" fill="#1E1E1E" stroke="#1E1E1E" stroke-width="0.1" textLength="39.07" lengthAdjust="spacingAndGlyphs" >App_Data</text>
<path d="M815.0,258.90000000000003 V263.40000000000003 H810.5 Z" fill="#1E1E1E" />
<path d="M826.8000000000001,260.6 V257.90000000000003 h3.8 l1.2,-1.4 h4.2 V265.1" fill="#FFFFFF" stroke="#1E1E1E" stroke-width="1.1" />
<path d="M825.8000000000001,260.5 H836.1 V265.8 H826.9 Z" fill="#1E1E1E" />
<text x="839.91" y="264.60" font-size="9.7" fill="#1E1E1E" stroke="#1E1E1E" stroke-width="0.1" textLength="81.37" lengthAdjust="spacingAndGlyphs" >App_WebReferences</text>
<path d="M828.5,272.34999999999997 V276.84999999999997 H824.0 Z" fill="#1E1E1E" />
<path d="M840.3000000000001,274.04999999999995 V271.34999999999997 h3.8 l1.2,-1.4 h4.2 V278.54999999999995" fill="#FFFFFF" stroke="#1E1E1E" stroke-width="1.1" />
<path d="M839.3000000000001,273.94999999999993 H849.6 V279.24999999999994 H840.4 Z" fill="#1E1E1E" />
<text x="853.41" y="278.05" font-size="9.7" fill="#1E1E1E" stroke="#1E1E1E" stroke-width="0.1" textLength="112.57" lengthAdjust="spacingAndGlyphs" >StudentInfoLegelAgreement</text>
<path d="M837.9,284.6 L841.4,288.0 L837.9,291.4 Z" fill="none" stroke="#333" stroke-width="1.1" />
<circle cx="856.1" cy="289.5" r="3" fill="#555"/>
<path d="M857.6,287.5 l4,-3.5 M859.6,284.0 h3 v3" fill="none" stroke="#1E1E1E" stroke-width="1.4" />
<text x="866.91" y="291.50" font-size="9.7" fill="#1E1E1E" stroke="#1E1E1E" stroke-width="0.1" textLength="72.37" lengthAdjust="spacingAndGlyphs" >Reference.svcmap</text>
<path d="M825.1,299.95 h2 M825.1,302.95 h2" fill="none" stroke="#1E1E1E" stroke-width="1" />
<circle cx="831.6" cy="301.45" r="4" fill="none" stroke="#1E1E1E" stroke-width="1.1"/>
<path d="M827.6,301.45 h8 M831.6,297.45 v8" fill="none" stroke="#1E1E1E" stroke-width="0.9" />
<ellipse cx="831.6" cy="301.45" rx="1.8" ry="4" fill="none" stroke="#1E1E1E" stroke-width="0.8"/>
<text x="839.91" y="304.95" font-size="9.7" fill="#1E1E1E" stroke="#1E1E1E" stroke-width="0.1" textLength="50.97" lengthAdjust="spacingAndGlyphs" >Service.asmx</text>
<path d="M828.8000000000001,310.59999999999997 h4 l2.4,2.4 v6.5 h-6.4 v-2" fill="none" stroke="#1E1E1E" stroke-width="1.1" />
<circle cx="828.2" cy="316.09999999999997" r="2.2" fill="none" stroke="#1E1E1E" stroke-width="1.2"/>
<text x="839.91" y="318.40" font-size="9.7" fill="#1E1E1E" stroke="#1E1E1E" stroke-width="0.1" textLength="46.07" lengthAdjust="spacingAndGlyphs" >Web.config</text>
<path d="M801.5,326.15000000000003 V330.65000000000003 H797.0 Z" fill="#1E1E1E" />
<circle cx="817.3000000000001" cy="328.35" r="4.6" fill="none" stroke="#1E1E1E" stroke-width="1.2"/>
<path d="M813.1,326.75 h8.4 M813.1,329.95000000000005 h8.4" fill="none" stroke="#1E1E1E" stroke-width="0.9" />
<ellipse cx="817.3000000000001" cy="328.35" rx="1.9" ry="4.6" fill="none" stroke="#1E1E1E" stroke-width="0.9"/>
<text x="826.41" y="331.85" font-size="9.7" fill="#1E1E1E" stroke="#1E1E1E" stroke-width="0.1" textLength="59.97" lengthAdjust="spacingAndGlyphs" font-weight="bold" >WSCallSample</text>
<path d="M815.0,339.59999999999997 V344.09999999999997 H810.5 Z" fill="#1E1E1E" />
<path d="M826.8000000000001,341.29999999999995 V338.59999999999997 h3.8 l1.2,-1.4 h4.2 V345.79999999999995" fill="#FFFFFF" stroke="#1E1E1E" stroke-width="1.1" />
<path d="M825.8000000000001,341.19999999999993 H836.1 V346.49999999999994 H826.9 Z" fill="#1E1E1E" />
<text x="839.91" y="345.30" font-size="9.7" fill="#1E1E1E" stroke="#1E1E1E" stroke-width="0.1" textLength="42.57" lengthAdjust="spacingAndGlyphs" >App_Code</text>
<path d="M824.4,351.85 L827.9,355.25 L824.4,358.65 Z" fill="none" stroke="#333" stroke-width="1.1" />
<path d="M843.7,353.05 q-0.6,-0.6 -1.6,-0.6 q-2.2,0 -2.2,2.8 q0,2.8 2.2,2.8 q1,0 1.6,-0.6" fill="none" stroke="#388A34" stroke-width="1.5" />
<path d="M844.7,354.05 h3.2 M844.7,356.45 h3.2" fill="none" stroke="#4FA24F" stroke-width="1.3" />
<text x="853.41" y="358.75" font-size="9.7" fill="#1E1E1E" stroke="#1E1E1E" stroke-width="0.1" textLength="41.37" lengthAdjust="spacingAndGlyphs" >IService.cs</text>
<path d="M824.4,365.3 L827.9,368.7 L824.4,372.09999999999997 Z" fill="none" stroke="#333" stroke-width="1.1" />
<path d="M843.7,366.5 q-0.6,-0.6 -1.6,-0.6 q-2.2,0 -2.2,2.8 q0,2.8 2.2,2.8 q1,0 1.6,-0.6" fill="none" stroke="#388A34" stroke-width="1.5" />
<path d="M844.7,367.5 h3.2 M844.7,369.9 h3.2" fill="none" stroke="#4FA24F" stroke-width="1.3" />
<text x="853.41" y="372.20" font-size="9.7" fill="#1E1E1E" stroke="#1E1E1E" stroke-width="0.1" textLength="39.27" lengthAdjust="spacingAndGlyphs" >Service.cs</text>
<path d="M810.9,378.75 L814.4,382.15 L810.9,385.54999999999995 Z" fill="none" stroke="#333" stroke-width="1.1" />
<path d="M826.2,380.65 V378.54999999999995 h4.4 l1.1,-1.2 h4.3 V380.65" fill="#FFFFFF" stroke="#1E1E1E" stroke-width="1.1" />
<rect x="825.7" y="380.54999999999995" width="10.5" height="6.4" fill="#1E1E1E" />
<text x="839.91" y="385.65" font-size="9.7" fill="#1E1E1E" stroke="#1E1E1E" stroke-width="0.1" textLength="13.57" lengthAdjust="spacingAndGlyphs" >Bin</text>
<path d="M825.1,394.1 h2 M825.1,397.1 h2" fill="none" stroke="#1E1E1E" stroke-width="1" />
<circle cx="831.6" cy="395.6" r="4" fill="none" stroke="#1E1E1E" stroke-width="1.1"/>
<path d="M827.6,395.6 h8 M831.6,391.6 v8" fill="none" stroke="#1E1E1E" stroke-width="0.9" />
<ellipse cx="831.6" cy="395.6" rx="1.8" ry="4" fill="none" stroke="#1E1E1E" stroke-width="0.8"/>
<text x="839.91" y="399.10" font-size="9.7" fill="#1E1E1E" stroke="#1E1E1E" stroke-width="0.1" textLength="43.57" lengthAdjust="spacingAndGlyphs" >Service.svc</text>
<path d="M815.0,406.84999999999997 V411.34999999999997 H810.5 Z" fill="#1E1E1E" />
<path d="M828.8000000000001,404.74999999999994 h4.3 l2.6,2.6 v6.5 h-6.9 Z" fill="none" stroke="#1E1E1E" stroke-width="1.1" />
<circle cx="828.0" cy="410.84999999999997" r="2.8" fill="#3C9AE0"/>
<path d="M825.2,410.84999999999997 h5.6 M828.0,408.04999999999995 v5.6" fill="none" stroke="#D8ECFA" stroke-width="0.6" />
<text x="839.91" y="412.55" font-size="9.7" fill="#1E1E1E" stroke="#1E1E1E" stroke-width="0.1" textLength="67.07" lengthAdjust="spacingAndGlyphs" >StudentInfo.aspx</text>
<path d="M824.4,419.1 L827.9,422.5 L824.4,425.9 Z" fill="none" stroke="#333" stroke-width="1.1" />
<path d="M842.5000000000001,418.2 h4.3 l2.6,2.6 v6.5 h-6.9 Z" fill="none" stroke="#1E1E1E" stroke-width="1.1" />
<path d="M839.6,419.3 h3.6 M841.6,417.5 l1.8,1.8 l-1.8,1.8" fill="none" stroke="#1E6BC6" stroke-width="1.3" />
<text x="853.41" y="426.00" font-size="9.7" fill="#1E1E1E" stroke="#1E1E1E" stroke-width="0.1" textLength="77.27" lengthAdjust="spacingAndGlyphs" >StudentInfo.aspx.cs</text>
<path d="M828.8000000000001,431.6499999999999 h4 l2.4,2.4 v6.5 h-6.4 v-2" fill="none" stroke="#1E1E1E" stroke-width="1.1" />
<circle cx="828.2" cy="437.1499999999999" r="2.2" fill="none" stroke="#1E1E1E" stroke-width="1.2"/>
<text x="839.91" y="439.45" font-size="9.7" fill="#1E1E1E" stroke="#1E1E1E" stroke-width="0.1" textLength="46.27" lengthAdjust="spacingAndGlyphs" >Web.config</text>
<rect x="788.3" y="489.5" width="73.9" height="14.3" fill="#F5F5F5" />
<text x="791.90" y="500.30" font-size="10.0" fill="#0E70C0" stroke="#0E70C0" stroke-width="0.1" textLength="67.70" lengthAdjust="spacingAndGlyphs" >Solution Explorer</text>
<rect x="862" y="490" width="1" height="13.5" fill="#CCCEDB" />
<text x="866.50" y="500.30" font-size="10.0" fill="#444444" stroke="#444444" stroke-width="0.1" textLength="56.50" lengthAdjust="spacingAndGlyphs" >Team Explorer</text>
<rect x="925.6" y="490" width="1" height="13.5" fill="#CCCEDB" />
<text x="930.10" y="500.30" font-size="10.0" fill="#444444" stroke="#444444" stroke-width="0.1" textLength="42.20" lengthAdjust="spacingAndGlyphs" >Class View</text>
<rect x="1019.3" y="63.5" width="4.7" height="39.5" fill="#CCCEDB" />
<g transform="translate(1008.6,63.9) rotate(90)">
<text x="-0.48" y="0.00" font-size="9.6" fill="#1E1E1E" stroke="#1E1E1E" stroke-width="0.1" textLength="39.66" lengthAdjust="spacingAndGlyphs" >Properties</text>
</g>
<rect x="0" y="527.2" width="1024" height="18" fill="#007ACC" />
<text x="3.00" y="540.30" font-size="10" fill="#FFFFFF" stroke="#FFFFFF" stroke-width="0.1" textLength="24.50" lengthAdjust="spacingAndGlyphs" >Ready</text>
<text x="758.40" y="540.30" font-size="10" fill="#FFFFFF" stroke="#FFFFFF" stroke-width="0.1" textLength="17.30" lengthAdjust="spacingAndGlyphs" >Ln 9</text>
<text x="827.70" y="540.30" font-size="10" fill="#FFFFFF" stroke="#FFFFFF" stroke-width="0.1" textLength="25.10" lengthAdjust="spacingAndGlyphs" >Col 10</text>
<text x="896.20" y="540.30" font-size="10" fill="#FFFFFF" stroke="#FFFFFF" stroke-width="0.1" textLength="27.90" lengthAdjust="spacingAndGlyphs" >Ch 139</text>
<text x="998.00" y="540.30" font-size="10" fill="#FFFFFF" stroke="#FFFFFF" stroke-width="0.1" textLength="14.80" lengthAdjust="spacingAndGlyphs" >INS</text>
<defs>
<linearGradient id="tb" x1="0" y1="0" x2="0" y2="1"><stop offset="0" stop-color="#1a1f24"/><stop offset="0.15" stop-color="#0c1116"/><stop offset="1" stop-color="#0a0e12"/></linearGradient>
<radialGradient id="wg1" cx="0.5" cy="0.5" r="0.5"><stop offset="0" stop-color="#2f4a3a" stop-opacity="0.9"/><stop offset="1" stop-color="#2f4a3a" stop-opacity="0"/></radialGradient>
<radialGradient id="wg2" cx="0.5" cy="0.5" r="0.5"><stop offset="0" stop-color="#3b5a45" stop-opacity="0.8"/><stop offset="1" stop-color="#3b5a45" stop-opacity="0"/></radialGradient>
<linearGradient id="btn" x1="0" y1="0" x2="0.3" y2="1"><stop offset="0" stop-color="#9a9d9c"/><stop offset="0.45" stop-color="#5a5e5d"/><stop offset="1" stop-color="#2e3231"/></linearGradient>
<linearGradient id="btna" x1="0" y1="0" x2="0" y2="1"><stop offset="0" stop-color="#d0d2d2"/><stop offset="0.5" stop-color="#a9acac"/><stop offset="1" stop-color="#8a8e8e"/></linearGradient>
<radialGradient id="orb" cx="0.5" cy="0.4" r="0.6"><stop offset="0" stop-color="#7fc4e8"/><stop offset="0.6" stop-color="#2a77b5"/><stop offset="1" stop-color="#0e2f55"/></radialGradient>
</defs>
<rect x="0" y="545" width="1024" height="30" fill="url(#tb)" />
<rect x="0" y="545" width="1024" height="1.8" fill="#565c60" />
<defs><linearGradient id="wall" x1="0" y1="0" x2="1" y2="0"><stop offset="0" stop-color="#0c1014" stop-opacity="0"/><stop offset="0.17" stop-color="#14201a" stop-opacity="0.9"/><stop offset="0.3" stop-color="#16241d"/><stop offset="0.5" stop-color="#1c2e24"/><stop offset="0.7" stop-color="#1e3226"/><stop offset="0.77" stop-color="#16231c"/><stop offset="0.82" stop-color="#0e1418"/><stop offset="1" stop-color="#0c1014"/></linearGradient></defs>
<rect x="0" y="546.8" width="1024" height="28.2" fill="url(#wall)" />
<ellipse cx="590" cy="553" rx="45" ry="10" fill="#43664e" opacity="0.8" filter="url(#blur)"/>
<ellipse cx="690" cy="552" rx="45" ry="9" fill="#4a7556" opacity="0.85" filter="url(#blur)"/>
<ellipse cx="745" cy="557" rx="35" ry="10" fill="#44684e" opacity="0.7" filter="url(#blur)"/>
<ellipse cx="528" cy="560" rx="22" ry="14" fill="#55523f" opacity="0.6" filter="url(#blur)"/>
<ellipse cx="640" cy="568" rx="55" ry="8" fill="#2f4e3a" opacity="0.7" filter="url(#blur)"/>
<ellipse cx="285" cy="556" rx="50" ry="10" fill="#22382a" opacity="0.6" filter="url(#blur)"/>
<defs><filter id="blur" x="-50%" y="-50%" width="200%" height="200%"><feGaussianBlur stdDeviation="6"/></filter></defs>
<defs><radialGradient id="orb2" cx="0.5" cy="0.85" r="0.6"><stop offset="0" stop-color="#29d0ff"/><stop offset="0.5" stop-color="#1a6fb8"/><stop offset="1" stop-color="#123a66"/></radialGradient><linearGradient id="orbhi" x1="0" y1="0" x2="0" y2="1"><stop offset="0" stop-color="#ffffff" stop-opacity="0.75"/><stop offset="1" stop-color="#ffffff" stop-opacity="0.05"/></linearGradient></defs>
<circle cx="20.2" cy="560.4" r="13.4" fill="url(#orb2)" stroke="#3a4a5a" stroke-width="0.8"/>
<ellipse cx="20.2" cy="554.5" rx="10.5" ry="6.5" fill="url(#orbhi)"/>
<path d="M13.8,553.8 q3.2,-1.6 7,0.2 l-1,5.3 q-3.3,-1.6 -6.8,-0.2 Z" fill="#F0502A" />
<path d="M21.5,554.4 q3.5,1.8 7.6,-0.2 l-1,5.6 q-3.8,1.8 -7.6,0 Z" fill="#8CC43F" />
<path d="M12.6,559.6 q3.3,-1.5 6.9,0.2 l-1,5.3 q-3.4,-1.6 -6.9,-0.2 Z" fill="#2FA6EA" />
<path d="M20.4,560.4 q3.6,1.8 7.6,-0.2 l-1,5.6 q-3.9,1.8 -7.6,0 Z" fill="#FDBE2C" />
<path d="M55.5,552 h9 l1.5,1.5 h12.5 v18 h-23 Z" fill="#E9CF7A" />
<rect x="56.5" y="553.2" width="21" height="2.2" fill="#F7F2DE" />
<rect x="57.5" y="551.2" width="2.4" height="1.8" fill="#3bb54a" />
<rect x="63.5" y="552.6" width="2.2" height="1.6" fill="#d03a2b" />
<rect x="70" y="553.6" width="2.4" height="1.6" fill="#3a8fd8" />
<rect x="55.5" y="556.5" width="23" height="15" fill="#F6DE95" />
<path d="M59.5,571.5 v-6 q0,-1.5 1.5,-1.5 h11.5 q1.5,0 1.5,1.5 v6 h-3.5 v-3.5 h-7.5 v3.5 Z" fill="#8CC5EC" />
<circle cx="113" cy="560.3" r="7.8" fill="#1C86D8"/>
<circle cx="113.2" cy="559.2" r="3.4" fill="#0c1014"/>
<rect x="106" y="559.8" width="14" height="2.3" fill="#1C86D8" />
<path d="M113.5,562.4 h7.5 v2.8 h-7.5 Z" fill="#0c1014" />
<ellipse cx="113.8" cy="559.6" rx="13.2" ry="4.3" fill="none" stroke="#E8B53A" stroke-width="1.7" transform="rotate(-38 113.8 559.6)"/>
<rect x="148.6" y="551.7" width="20.3" height="18.8" fill="#8dbde0" rx="1.5"/>
<circle cx="158.5" cy="561" r="7" fill="#F07D17"/>
<path d="M156,557 l6,4 l-6,4 Z" fill="#fff" />
<circle cx="206" cy="559.6" r="11.2" fill="#E5601E"/>
<path d="M209,548.8 a11.2,11.2 0 0 1 6.5,16 q-2,-6 -4.5,-9 Z" fill="#F7C23A" />
<circle cx="207" cy="556.8" r="7.6" fill="#1F63B8"/>
<circle cx="206" cy="554.5" r="4.8" fill="#3CA0E6" opacity="0.85"/>
<path d="M196.5,551.5 q1.5,1 2.5,2.5 q2,-1.5 4.5,-1.2 q-1.2,1.2 -0.8,2.5 q1.5,0.2 2,1.5 q-2.5,0.5 -2.5,2.5 q0.5,3 4.5,3.5 q3,0.2 5.5,-1.5 q-1.5,3.5 -6,4 q-6,0 -9,-4.5 q-2,-4.5 -0.7,-9.3 Z" fill="#E96A1F" />
<circle cx="252.9" cy="559.8" r="11.3" fill="#DB4437"/>
<path d="M252.9,559.8 L262.68580000000003,554.15 A11.3,11.3 0 0 1 252.9,571.0999999999999 Z" fill="#F4C20D" />
<path d="M252.9,559.8 L252.9,571.0999999999999 A11.3,11.3 0 0 1 243.1142,554.15 Z" fill="#0F9D58" />
<circle cx="252.9" cy="559.8" r="5.311" fill="#fff"/>
<circle cx="252.9" cy="559.8" r="4.0680000000000005" fill="#4285F4"/>
<rect x="287.8" y="547.8" width="22.7" height="23.2" fill="#F2F2F2" rx="1.5"/>
<rect x="293.0" y="553.0" width="3" height="3" fill="#E53935" />
<rect x="297.6" y="553.0" width="3" height="3" fill="#E53935" />
<rect x="302.2" y="553.0" width="3" height="3" fill="#E53935" />
<rect x="293.0" y="557.4" width="3" height="3" fill="#43A047" />
<rect x="297.6" y="557.4" width="3" height="3" fill="#1E88E5" />
<rect x="302.2" y="557.4" width="3" height="3" fill="#FB8C00" />
<rect x="293.0" y="561.8" width="3" height="3" fill="#43A047" />
<rect x="297.6" y="561.8" width="3" height="3" fill="#FDD835" />
<rect x="302.2" y="561.8" width="3" height="3" fill="#FB8C00" />
<rect x="323.8" y="546" width="43.69999999999999" height="28" fill="url(#btn)" rx="1.5" stroke="#8f9292" stroke-width="0.9"/>
<circle cx="346" cy="560" r="12" fill="#76B83F"/>
<path d="M338.8,555 L345.2,571.5" fill="none" stroke="#fff" stroke-width="3.2" />
<path d="M340.8,560.5 q1.8,4.5 5.2,3.8 q3.2,-0.8 4.2,-10.5 M350,556 q-0.5,6.5 5.8,7.2" fill="none" stroke="#fff" stroke-width="2.8" />
<rect x="369.8" y="546" width="44.599999999999966" height="28" fill="url(#btn)" rx="1.5" stroke="#8f9292" stroke-width="0.9"/>
<circle cx="392" cy="560" r="10.5" fill="#DB4437"/>
<path d="M392,560 L401.093,554.75 A10.5,10.5 0 0 1 392.0,570.5 Z" fill="#F4C20D" />
<path d="M392,560 L392,570.5 A10.5,10.5 0 0 1 382.907,554.75 Z" fill="#0F9D58" />
<circle cx="392" cy="560" r="4.935" fill="#fff"/>
<circle cx="392" cy="560" r="3.78" fill="#4285F4"/>
<rect x="393.5" y="561.5" width="9.5" height="9.5" fill="#DADADA" />
<circle cx="398.2" cy="564.5" r="1.7" fill="#9a9a9a"/>
<path d="M395,570 q3.2,-4 6.4,0 Z" fill="#9a9a9a" />
<rect x="417" y="546" width="43" height="28" fill="url(#btna)" rx="1.5" stroke="#8f9292" stroke-width="0.9"/>
<rect x="426.4" y="547.8" width="24.2" height="24.2" fill="#68217A" />
<g transform="translate(430.2,552.2) scale(1.12) translate(-9.1,-5.5)">
<path d="M9.1,8.6 L10.6,8 L14.4,11.2 L19.9,5.5 L23.8,6.9 L23.8,18.4 L19.9,19.8 L14.4,13.9 L10.6,17.2 L9.1,16.6 Z M10.7,10.6 L12.5,12.5 L10.7,14.4 Z M20,9.6 L20,15.4 L16.9,12.5 Z" fill="#fff" fill-rule="evenodd"/>
</g>
<rect x="463" y="546" width="43.89999999999998" height="28" fill="url(#btn)" rx="1.5" stroke="#8f9292" stroke-width="0.9"/>
<ellipse cx="484" cy="561.5" rx="11" ry="8" fill="#cde6f7" stroke="#6fa8d4" stroke-width="0.8" transform="rotate(-20 484 561.5)"/>
<circle cx="477.5" cy="561" r="1.8" fill="#e84a3a"/>
<circle cx="480.5" cy="557" r="1.8" fill="#7ac143"/>
<circle cx="486" cy="555.5" r="1.8" fill="#f5c020"/>
<circle cx="483" cy="562" r="1.4" fill="#445"/>
<path d="M485,571 L493.5,551" fill="none" stroke="#E8892A" stroke-width="1.8" />
<path d="M492,552 l2.5,-3 l1.5,1.5 Z" fill="#e0b080" />
<path d="M873,562.4 L876,559.2 L879,562.4 Z" fill="#fff" />
<path d="M889.5,555 v11.5" fill="none" stroke="#ddd" stroke-width="1" />
<path d="M890,555.5 h6 v4.5 h-6 Z" fill="#eee" />
<circle cx="896.3" cy="563.5" r="3" fill="#e53935"/>
<path d="M895,562.2 l2.6,2.6 M897.6,562.2 l-2.6,2.6" fill="none" stroke="#fff" stroke-width="0.8" />
<path d="M908,556 h6 v10 h-7.5 v-8.5 Z" fill="#cfcfcf" />
<path d="M913,557 l3,-1.5 v5 l-3,1" fill="#eee" />
<rect x="925.5" y="564.5" width="1.4" height="1.3" fill="#e6e6e6" />
<rect x="927.6" y="562.7" width="1.4" height="3.1" fill="#e6e6e6" />
<rect x="929.7" y="560.9" width="1.4" height="4.9" fill="#e6e6e6" />
<rect x="931.8" y="559.1" width="1.4" height="6.7" fill="#e6e6e6" />
<rect x="933.9" y="557.3" width="1.4" height="8.5" fill="#e6e6e6" />
<path d="M942.5,559 h2.5 l3,-3 v11 l-3,-3 h-2.5 Z" fill="#e6e6e6" />
<path d="M950,558 q1.5,2.5 0,5 M952.3,556.5 q2.8,4 0,8" fill="none" stroke="#e6e6e6" stroke-width="1" />
<text x="966.90" y="557.80" font-size="9.9" fill="#F4F4F4" stroke="#F4F4F4" stroke-width="0.1" textLength="37.79" lengthAdjust="spacingAndGlyphs" >11:57 AM</text>
<text x="966.50" y="570.60" font-size="9.9" fill="#F4F4F4" stroke="#F4F4F4" stroke-width="0.1" textLength="39.79" lengthAdjust="spacingAndGlyphs" >7/24/2016</text>
<rect x="1014" y="546.5" width="9" height="28" fill="#15191c" stroke="#6f7477" stroke-width="0.9" rx="1"/>
</svg>
</body></html>
